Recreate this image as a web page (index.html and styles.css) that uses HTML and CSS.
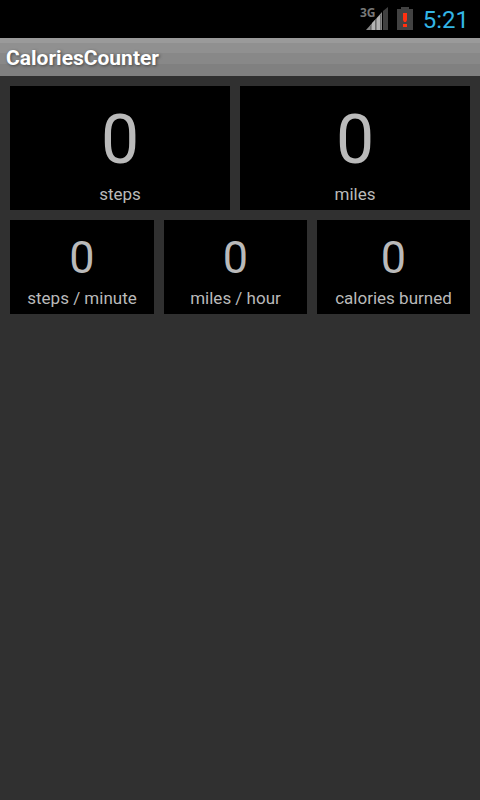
FILE: index.html
```html
<!DOCTYPE html>
<html lang="en">
<head>
<meta charset="utf-8">
<meta name="viewport" content="width=device-width, initial-scale=1">
<title>CaloriesCounter</title>
<link rel="stylesheet" href="styles.css">
</head>
<body>
<div class="status-bar">
  <svg class="signal" width="28" height="26" viewBox="0 0 28 26" role="img" aria-label="Mobile signal">
    <path fill="#868686" d="M6 24L22 6v18z"/>
    <path fill="#b4b4b4" d="M12 17l3-3v10h-3zM17 12l3-3v15h-3z"/>
    <path fill="#6c6c6c" d="M10 20h1v4h-1zM15 14h1v10h-1zM20 9h1v15h-1z"/>
    <path fill="#404040" d="M23 5l5-4v23h-5z"/>
    <text class="network" x="0" y="11">3G</text>
  </svg>
  <svg class="battery" width="16" height="26" viewBox="0 0 16 26" role="img" aria-label="Battery low">
    <path fill="#424242" d="M4 1h8v2h4v21H0V3h4z"/>
    <path fill="#ff3010" d="M6 7h4v7l-1 2H7l-1-2zM6 18h4v3H6z"/>
  </svg>
  <time class="clock">5:21</time>
</div>
<header class="title-bar"><h1>CaloriesCounter</h1></header>
<main class="counters">
  <div class="row row-large">
    <section class="card"><output class="value" id="steps">0</output><label class="name" for="steps">steps</label></section>
    <section class="card"><output class="value" id="miles">0</output><label class="name" for="miles">miles</label></section>
  </div>
  <div class="row row-small">
    <section class="card"><output class="value" id="pace">0</output><label class="name" for="pace">steps / minute</label></section>
    <section class="card"><output class="value" id="speed">0</output><label class="name" for="speed">miles / hour</label></section>
    <section class="card"><output class="value" id="calories">0</output><label class="name" for="calories">calories burned</label></section>
  </div>
</main>
</body>
</html>
```
FILE: styles.css
```css
* { box-sizing: border-box; }

body {
  margin: 0;
  background: #303030;
  color: #bababa;
  font-family: Roboto, "Liberation Sans", sans-serif;
}

.status-bar {
  display: flex;
  justify-content: flex-end;
  align-items: flex-start;
  height: 38px;
  padding-right: 11px;
  background: #000;
}

.signal,
.battery {
  align-self: center;
  overflow: visible;
}

.signal { margin-right: 9px; }

.network {
  fill: #777;
  font-family: "Open Sans", Roboto, sans-serif;
  font-size: 12px;
  font-weight: 700;
}

.battery { margin-right: 10px; }

.clock {
  color: #33b5e5;
  font-size: 24px;
  line-height: 40px;
}

.title-bar {
  height: 38px;
  padding: 0 6px;
  background: linear-gradient(#9a9a9a 0 5px, #909090 5px 15px, #888 15px 26px, #808080 26px);
}

.title-bar h1 {
  margin: 0;
  color: #fff;
  font-size: 21px;
  font-weight: 700;
  line-height: 40px;
  text-shadow: 1px 1px 3px #444;
}

.counters {
  display: grid;
  gap: 10px;
  padding: 10px;
}

.row {
  display: grid;
  gap: 10px;
}

.row-large { grid-template-columns: 22fr 23fr; }
.row-small { grid-template-columns: 144fr 143fr 153fr; }

.card {
  display: flex;
  flex-direction: column;
  align-items: center;
  background: #000;
}

.row-large .card { padding: 12px 4px 4px; }
.row-small .card { padding: 10px 4px 4px; }

.row-large .value {
  font-size: 68px;
  line-height: 84px;
}

.row-small .value {
  font-size: 45px;
  line-height: 56px;
}

.name {
  font-size: 17px;
  line-height: 24px;
}
```
